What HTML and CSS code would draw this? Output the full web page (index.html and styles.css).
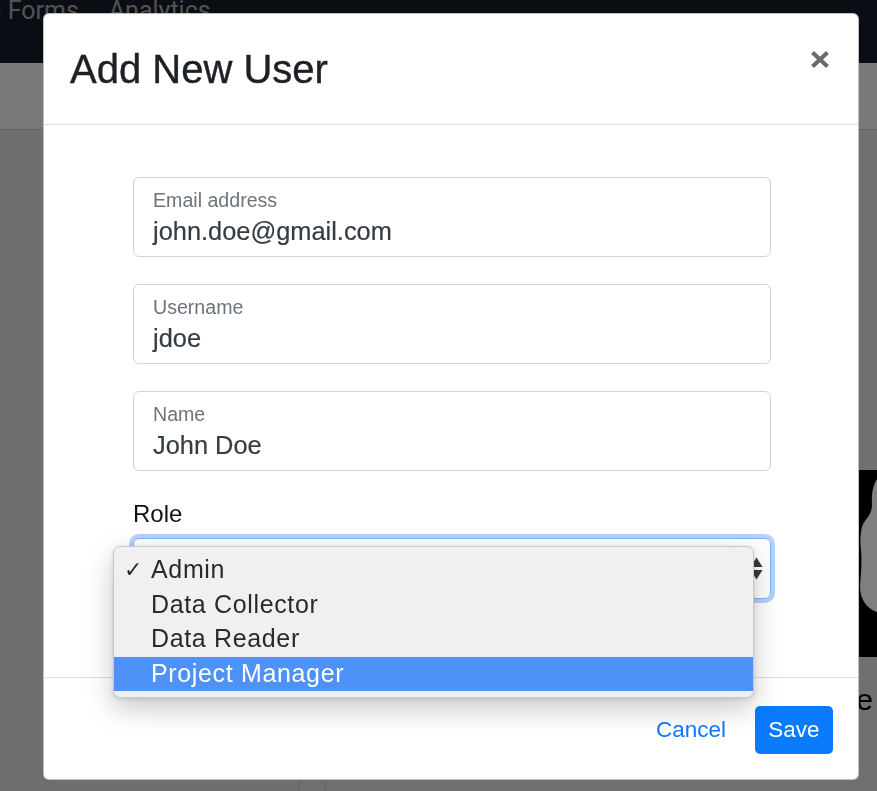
FILE: index.html
```html
<!DOCTYPE html>
<html lang="en">
<head>
<meta charset="utf-8">
<title>Add New User</title>
<link rel="stylesheet" href="styles.css">
</head>
<body>
<div class="page">
  <header class="navbar">
    <nav class="nav-list">
      <span class="nav-item">Design Forms</span>
      <span class="nav-item">Analytics</span>
    </nav>
  </header>
  <div class="subbar"></div>
  <div class="content">
    <aside class="sidebar"></aside>
    <section class="main">
      <div class="card">
        <svg class="hero" width="200" height="187" viewBox="0 0 200 187" aria-hidden="true">
          <rect x="0" y="0" width="200" height="187" fill="#000"/>
          <path d="M205 5 C198 8 194 20 195 34 C195 44 190 48 186 54 C183 62 183 72 184 80 C185 92 184 104 183 116 C183 130 190 140 205 144 Z" fill="#fff"/>
        </svg>
        <p class="caption">Profile</p>
      </div>
    </section>
  </div>
</div>

<div class="backdrop"></div>

<div class="modal" role="dialog" aria-labelledby="modal-title">
  <div class="modal-header">
    <h2 class="modal-title" id="modal-title">Add New User</h2>
    <button class="close" aria-label="Close">
      <svg width="20" height="19" viewBox="0 0 20 19" aria-hidden="true">
        <path d="M2.5 2.5 L17.5 16.5 M17.5 2.5 L2.5 16.5" stroke="#6b6b6b" stroke-width="4.2" stroke-linecap="butt"/>
      </svg>
    </button>
  </div>
  <div class="modal-body">
    <div class="field">
      <span class="field-label">Email address</span>
      <span class="field-value">john.doe@gmail.com</span>
    </div>
    <div class="field">
      <span class="field-label">Username</span>
      <span class="field-value">jdoe</span>
    </div>
    <div class="field">
      <span class="field-label">Name</span>
      <span class="field-value">John Doe</span>
    </div>
    <label class="role-label">Role</label>
    <div class="select">
      <span class="select-value">Admin</span>
      <span class="select-arrows">
        <svg width="13" height="23" viewBox="0 0 13 23" aria-hidden="true">
          <path d="M6.5 0.5 L12.5 10 L0.5 10 Z" fill="#3a3a3a"/>
          <path d="M0.5 13 L12.5 13 L6.5 22.5 Z" fill="#3a3a3a"/>
        </svg>
      </span>
    </div>
  </div>
  <div class="modal-footer">
    <button class="btn btn-link">Cancel</button>
    <button class="btn btn-primary">Save</button>
  </div>

  <ul class="menu" role="listbox">
    <li class="menu-item checked"><span class="check">✓</span><span class="opt">Admin</span></li>
    <li class="menu-item"><span class="opt">Data Collector</span></li>
    <li class="menu-item"><span class="opt">Data Reader</span></li>
    <li class="menu-item active"><span class="opt">Project Manager</span></li>
  </ul>
</div>
</body>
</html>
```

FILE: styles.css
```css
* { box-sizing: border-box; }

html, body {
  margin: 0;
  height: 791px;
  overflow: hidden;
}

body {
  font-family: "Liberation Sans", Arial, sans-serif;
  background: #e0e0e0;
  color: #212529;
}

.page {
  display: flex;
  flex-direction: column;
  height: 791px;
}

.navbar {
  height: 63px;
  background: #151a29;
  flex: none;
  overflow: hidden;
}

.nav-list {
  display: flex;
  gap: 30px;
  margin-left: -75px;
  margin-top: -4px;
}

.nav-item {
  font-family: Roboto, "Liberation Sans", sans-serif;
  font-size: 25px;
  line-height: 30px;
  color: #a2a5ad;
}

.subbar {
  height: 67px;
  flex: none;
  background: #f2f2f2;
  border-bottom: 1px solid #c4c4c4;
}

.content {
  flex: 1;
  display: flex;
}

.sidebar {
  width: 300px;
  flex: none;
  border-right: 1px solid #c4c4c4;
  background: #dedede;
}

.main {
  flex: 1;
  padding-left: 25px;
}

.card {
  height: 100%;
  border-left: 1px solid #c4c4c4;
  background: #e0e0e0;
  display: flex;
  flex-direction: column;
  align-items: flex-end;
  padding-top: 340px;
}

.hero {
  display: block;
}

.caption {
  margin: 26px 4px 0 0;
  font-size: 30px;
  line-height: 34px;
  color: #000;
}

.backdrop {
  position: fixed;
  inset: 0;
  background: rgba(0, 0, 0, 0.5);
}

.modal {
  position: absolute;
  left: 43px;
  top: 13px;
  width: 816px;
  height: 767px;
  background: #fff;
  border: 1px solid rgba(0, 0, 0, 0.25);
  border-radius: 6px;
  display: flex;
  flex-direction: column;
}

.modal-header {
  height: 111px;
  flex: none;
  display: flex;
  align-items: flex-start;
  justify-content: space-between;
  padding: 31px 28px 0 26px;
  border-bottom: 1px solid #dbe0e5;
}

.modal-title {
  margin: 0;
  font-size: 40px;
  line-height: 48px;
  font-weight: 400;
  color: #1d2125;
  -webkit-text-stroke: 0.4px #1d2125;
}

.close {
  margin-top: 5px;
  padding: 0;
  border: 0;
  background: transparent;
  line-height: 0;
}

.modal-body {
  flex: 1;
  padding: 52px 87px 0 89px;
  display: flex;
  flex-direction: column;
}

.field {
  height: 80px;
  border: 1px solid #cdd3da;
  border-radius: 6px;
  padding: 10px 19px 0;
  margin-bottom: 27px;
  display: flex;
  flex-direction: column;
}

.field:nth-of-type(3) { margin-bottom: 0; }

.field-label {
  font-size: 19.6px;
  line-height: 24px;
  color: #6c737a;
}

.field-value {
  margin-top: 4px;
  font-size: 25.4px;
  line-height: 31px;
  color: #363c43;
  -webkit-text-stroke: 0.2px #363c43;
}

.role-label {
  margin-top: 28px;
  font-size: 24px;
  line-height: 29px;
  color: #111;
}

.select {
  margin-top: 10px;
  height: 61px;
  border: 1px solid #7eb3f7;
  border-radius: 6px;
  box-shadow: 0 0 0 4px #b3d2fb;
  display: flex;
  align-items: center;
  justify-content: space-between;
  padding: 0 7px 0 19px;
}

.select-value {
  font-size: 24px;
  color: #3f454c;
}

.select-arrows {
  line-height: 0;
}

.modal-footer {
  height: 102px;
  flex: none;
  border-top: 1px solid #dbe0e5;
  display: flex;
  align-items: center;
  justify-content: flex-end;
  padding: 2px 25px 0 0;
}

.btn {
  font-family: "Liberation Sans", Arial, sans-serif;
  font-size: 22.5px;
  line-height: 26px;
  border: 0;
  border-radius: 5px;
  cursor: pointer;
}

.btn-link {
  background: transparent;
  color: #0b7bfd;
  padding: 11px 15px;
  margin-right: 14px;
}

.btn-primary {
  background: #0b7bfd;
  color: #fff;
  width: 78px;
  height: 48px;
  padding: 0;
}

.menu {
  position: absolute;
  left: 69px;
  top: 532px;
  width: 641px;
  margin: 0;
  padding: 6px 0 6px;
  list-style: none;
  background: #f0f0f0;
  border: 1px solid #c9c9c9;
  border-radius: 7px;
  box-shadow: 0 10px 28px rgba(0, 0, 0, 0.22), 0 1px 4px rgba(0, 0, 0, 0.12);
  overflow: hidden;
}

.menu-item {
  height: 34.5px;
  line-height: 33px;
  padding-left: 10px;
  font-size: 25px;
  color: #2a2a2a;
  display: flex;
}

.menu-item.active {
  background: #4f92f7;
  color: #fff;
}

.check {
  width: 27px;
  flex: none;
  font-size: 22px;
  font-family: "DejaVu Sans", sans-serif;
}

.opt {
  margin-left: 27px;
  letter-spacing: 0.65px;
}

.check + .opt {
  margin-left: 0;
}
```
